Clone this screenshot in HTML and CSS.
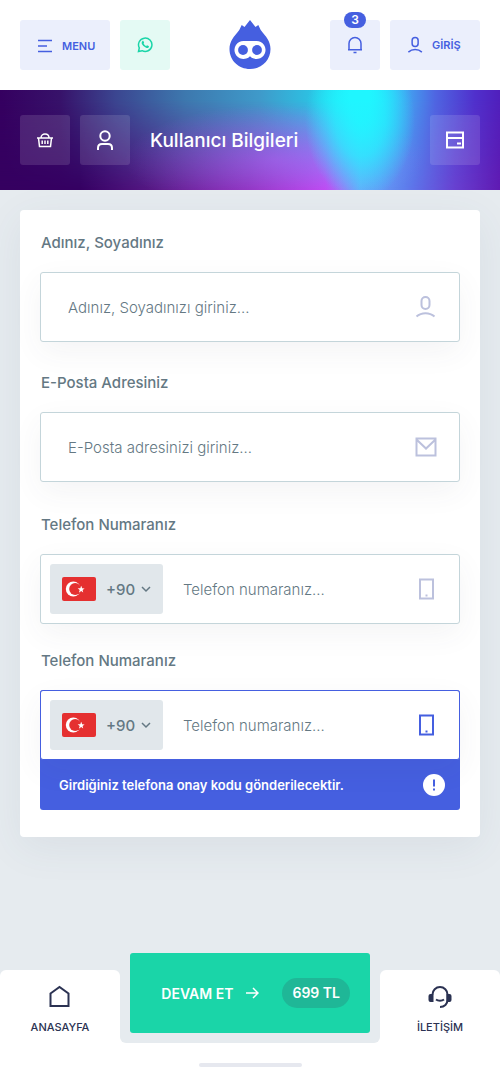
FILE: index.html
```html
<!DOCTYPE html>
<html lang="tr">
<head>
<meta charset="utf-8">
<meta name="viewport" content="width=device-width, initial-scale=1">
<title>Kullanıcı Bilgileri</title>
<link rel="stylesheet" href="styles.css">
</head>
<body>
<svg class="defs" aria-hidden="true">
  <symbol id="person" viewBox="0 0 22 24"><rect x="6.500" y="2" width="8" height="12" rx="4"/><path d="M1.500 21.500C6.500 17 14.500 17 19.500 21.500"/></symbol>
  <symbol id="phone" viewBox="0 0 16 24"><rect x="2" y="2.500" width="13" height="19"/><path d="M7.500 18.500h2"/></symbol>
  <symbol id="flag" viewBox="0 0 34 24"><rect width="34" height="24" rx="2" fill="#e53030"/><circle cx="11.300" cy="12" r="7.500" fill="#fff"/><circle cx="13.200" cy="12" r="6" fill="#e53030"/><path d="M19.300 8.800l.8 2.500 2.500.2-2 1.500.6 2.600-2-1.500-2.300 1.300.8-2.500-2-1.600h2.600z" fill="#fff"/></symbol>
  <symbol id="chevron" viewBox="0 0 10 7"><path d="M1 1l4 4 4-4"/></symbol>
</svg>

<header class="topbar">
  <div class="topbar-group">
    <button class="tile tile-wide" type="button">
      <svg class="icon icon-menu" viewBox="0 0 14 14"><path d="M0 1.500h14M0 7h9M0 12.500h14"/></svg>
      MENU
    </button>
    <a class="tile tile-green" href="#" aria-label="WhatsApp">
      <svg class="icon icon-whatsapp" viewBox="0 0 16 16"><path d="M1.500 14.500l.8-3.600A6.700 6.700 0 1 1 5.100 13.700z"/><path class="solid" d="M5.300 4.200c.4-.5 1-.4 1.200 0l.6 1.300c.2.4-.4.900-.6 1.100.6 1.200 1.500 2.100 2.700 2.600.3-.3.700-1 1.200-.8l1.300.7c.4.200.3.900-.1 1.300-.8.800-1.700.7-2.500.4A7.200 7.200 0 0 1 5 7.300c-.5-1.200-.5-2.200.3-3.100z"/></svg>
    </a>
  </div>
  <a class="logo" href="#" aria-label="Ana sayfa">
    <svg viewBox="0 0 42 50"><path fill="#455fe0" d="M21 0l5.500 7 2.800-2 2.400 4.900C37 16.500 41.500 21 41.500 29c0 11.500-9.200 20-20.500 20S.5 40.500.5 29C.5 21 5 16.500 10.300 9.900L12.700 5l2.800 2z"/><path fill="#fff" d="M14.500 21h13a9 9 0 1 1-6.500 15.200A9 9 0 1 1 14.500 21z"/><circle cx="14" cy="30" r="4.900" fill="#455fe0"/><circle cx="28" cy="30" r="4.900" fill="#455fe0"/></svg>
  </a>
  <div class="topbar-group">
    <button class="tile" type="button" aria-label="Bildirimler">
      <svg class="icon icon-bell" viewBox="0 0 16 18"><path d="M2 13.500V7.500a6 6 0 0 1 12 0v6M1 13.800h14M6.500 16.500h3"/></svg>
      <span class="badge">3</span>
    </button>
    <a class="tile tile-wide tile-login" href="#">
      <svg class="icon icon-login"><use href="#person"/></svg>
      GİRİŞ
    </a>
  </div>
</header>

<section class="hero">
  <a class="glass" href="#" aria-label="Sepet">
    <svg class="icon icon-basket" viewBox="0 0 16 16"><path d="M0 6h16M1.500 6l1 8.500h11l1-8.500M4 6c0-5.300 8-5.300 8 0M5.200 8.500v3.500M8 8.500v3.500M10.800 8.500v3.500"/></svg>
  </a>
  <a class="glass" href="#" aria-label="Hesap">
    <svg class="icon icon-user" viewBox="0 0 16 20"><circle cx="8" cy="6" r="4.700"/><path d="M1 20v-2c0-2.500 1.500-4 4-4h6c2.500 0 4 1.500 4 4v2"/></svg>
  </a>
  <h1 class="hero-title">Kullanıcı Bilgileri</h1>
  <a class="glass" href="#" aria-label="Ödeme">
    <svg class="icon icon-card" viewBox="0 0 18 18"><path d="M1 1.500h16v15H1zM1 7h16M11 12.500h4"/></svg>
  </a>
</section>

<main class="content">
  <form class="card">
    <div class="field">
      <label class="label" for="name">Adınız, Soyadınız</label>
      <div class="box">
        <input class="input" id="name" type="text" placeholder="Adınız, Soyadınızı giriniz...">
        <svg class="icon field-icon"><use href="#person"/></svg>
      </div>
    </div>
    <div class="field">
      <label class="label" for="email">E-Posta Adresiniz</label>
      <div class="box">
        <input class="input" id="email" type="email" placeholder="E-Posta adresinizi giriniz...">
        <svg class="icon field-icon" viewBox="0 0 24 24"><path d="M2.500 3.500h19v17h-19zM2.500 4.500l9.500 9 9.500-9"/></svg>
      </div>
    </div>
    <div class="field field-phone">
      <label class="label" for="phone1">Telefon Numaranız</label>
      <div class="box box-phone">
        <div class="code">
          <svg class="flag"><use href="#flag"/></svg>
          <select class="code-select" aria-label="Ülke kodu"><option>+90</option></select>
          <svg class="icon chevron"><use href="#chevron"/></svg>
        </div>
        <input class="input" id="phone1" type="tel" placeholder="Telefon numaranız...">
        <svg class="icon field-icon"><use href="#phone"/></svg>
      </div>
    </div>
    <div class="field field-phone">
      <label class="label" for="phone2">Telefon Numaranız</label>
      <div class="noted">
        <div class="box box-phone box-active">
          <div class="code">
            <svg class="flag"><use href="#flag"/></svg>
            <select class="code-select" aria-label="Ülke kodu"><option>+90</option></select>
            <svg class="icon chevron"><use href="#chevron"/></svg>
          </div>
          <input class="input" id="phone2" type="tel" placeholder="Telefon numaranız...">
          <svg class="icon field-icon"><use href="#phone"/></svg>
        </div>
        <p class="note">
          Girdiğiniz telefona onay kodu gönderilecektir.
          <svg class="note-icon" viewBox="0 0 22 22"><circle cx="11" cy="11" r="11" fill="#fff"/><path d="M10 5.500h2v7h-2zM10 14.500h2v2h-2z" fill="#455fe0"/></svg>
        </p>
      </div>
    </div>
  </form>
</main>

<footer class="bottom">
  <nav class="tabs">
    <a class="tab" href="#">
      <svg class="icon icon-tab" viewBox="0 0 24 24"><path d="M2.500 8.500L11.500 2l9 6.500v12.500h-18z"/></svg>
      ANASAYFA
    </a>
    <div class="dock">
      <button class="continue" type="button">
        DEVAM ET
        <svg class="icon icon-arrow" viewBox="0 0 13 12"><path d="M0 6h12M7 1l5 5-5 5"/></svg>
        <span class="price">699 TL</span>
      </button>
    </div>
    <a class="tab" href="#">
      <svg class="icon icon-tab" viewBox="0 0 24 24"><path d="M4.500 9.500a7.500 7.500 0 0 1 15 0v5.500c0 4-3 7-7.500 7M8 14.500c2 1.500 6 1.500 8 0"/><path class="solid" d="M2.500 9h3v8h-3A2 2 0 0 1 .5 15v-4a2 2 0 0 1 2-2zM18.500 9h3a2 2 0 0 1 2 2v4a2 2 0 0 1-2 2h-3z"/></svg>
      İLETİŞİM
    </a>
  </nav>
  <div class="home-area"><span class="home-bar"></span></div>
</footer>
</body>
</html>
```

FILE: styles.css
```css
* {
  box-sizing: border-box;
}

body {
  margin: 0;
  min-height: 100vh;
  display: flex;
  flex-direction: column;
  background: #e6ebef;
  color: #647883;
  font-family: Inter, "Open Sans", sans-serif;
  font-size: 15px;
}

a {
  color: inherit;
  text-decoration: none;
}

button,
input,
select {
  border: 0;
  padding: 0;
  background: none;
  color: inherit;
  font: inherit;
}

.defs {
  position: absolute;
  width: 0;
  height: 0;
}

.icon {
  flex: none;
  fill: none;
  stroke: currentColor;
  stroke-width: 2;
}

.icon .solid {
  fill: currentColor;
  stroke: none;
}

/* Top bar */
.topbar {
  display: grid;
  grid-template-columns: 1fr auto 1fr;
  align-items: center;
  padding: 20px;
  background: #fff;
}

.topbar-group {
  display: flex;
  gap: 10px;
}

.topbar-group:last-child {
  justify-content: flex-end;
}

.tile {
  position: relative;
  display: flex;
  align-items: center;
  justify-content: center;
  gap: 10px;
  width: 50px;
  height: 50px;
  border-radius: 3px;
  background: #ebeffc;
  color: #455fe0;
  font-size: 11px;
  font-weight: 600;
}

.tile-wide {
  justify-content: flex-start;
  width: 90px;
  padding: 2px 0 0 18px;
}

.tile-login {
  gap: 8px;
  padding: 0 0 0 17px;
}

.tile-green {
  background: #e4faf4;
  color: #1ad5a8;
}

.icon-menu {
  width: 14px;
  height: 14px;
  stroke-width: 1.5;
}

.icon-whatsapp {
  width: 16px;
  height: 16px;
  stroke-width: 1.5;
}

.icon-bell {
  width: 16px;
  height: 18px;
  stroke-width: 1.5;
}

.icon-login {
  width: 17px;
  height: 18px;
}

.badge {
  position: absolute;
  top: -8px;
  left: 14px;
  width: 22px;
  border-radius: 8px;
  background: #455fe0;
  color: #fff;
  font-size: 12px;
  line-height: 16px;
  text-align: center;
}

.logo {
  display: block;
  width: 42px;
  height: 50px;
}

/* Title banner */
.hero {
  position: relative;
  z-index: 0;
  display: flex;
  align-items: center;
  gap: 10px;
  height: 100px;
  padding: 0 20px;
  color: #fff;
  background: linear-gradient(90deg, #350060 0%, #37126a 12%, #3b4590 23%, #3d78ae 37%, #3f9aca 52%, #2dc0e2 62%, #1ff6ff 70%, #1ff6ff 74%, #3fb0f4 80%, #4f66e2 87%, #5030cc 95%, #501fbc 100%);
}

.hero::before,
.hero::after {
  content: "";
  position: absolute;
  inset: 0;
  z-index: -1;
}

.hero::before {
  background: linear-gradient(90deg, #350060 0%, #350062 16%, #5a1a88 32%, #8a2cb8 50%, #c045f0 65%, #a070f5 68%, #62aefa 72%, #5f9cf5 76%, #5f70e8 83%, #6840d0 91%, #601ab2 100%);
  mask-image: linear-gradient(transparent 10%, #000 100%);
}

.hero::after {
  background:
    radial-gradient(11% 80% at 72% 30%, rgba(31, 246, 255, 0.9) 0%, rgba(31, 246, 255, 0.65) 45%, rgba(31, 246, 255, 0) 100%),
    radial-gradient(30% 55% at 55% 70%, rgba(190, 100, 255, 0.45) 0%, rgba(190, 100, 255, 0) 100%);
}

.glass {
  display: flex;
  align-items: center;
  justify-content: center;
  width: 50px;
  height: 50px;
  border-radius: 3px;
  background: rgba(255, 255, 255, 0.12);
}

.icon-basket {
  width: 16px;
  height: 16px;
  stroke-width: 1.5;
}

.icon-user {
  width: 16px;
  height: 20px;
}

.icon-card {
  width: 18px;
  height: 18px;
}

.hero-title {
  flex: 1;
  margin: 0 10px;
  font-size: 19px;
  font-weight: 500;
}

/* Form */
.content {
  padding: 20px;
}

.card {
  padding: 20px 20px 27px;
  border-radius: 4px;
  background: #fff;
  box-shadow: 0 10px 40px rgba(70, 90, 110, 0.08);
}

.field + .field {
  margin-top: 28px;
}

.field + .field-phone {
  margin-top: 30px;
}

.field-phone + .field-phone {
  margin-top: 24px;
}

.label {
  display: block;
  margin-bottom: 16px;
  padding-left: 1px;
  line-height: 26px;
  font-weight: 500;
}

.box {
  display: flex;
  align-items: center;
  height: 70px;
  padding: 0 21px 0 27px;
  border: 1px solid #c4d5da;
  border-radius: 3px;
  background: #fff;
  box-shadow: 0 10px 30px rgba(60, 70, 90, 0.06);
}

.box-phone {
  gap: 20px;
  padding-left: 9px;
}

.input {
  flex: 1;
  min-width: 0;
  height: 100%;
  outline: 0;
  font-weight: 300;
}

.input::placeholder {
  color: #647883;
  opacity: 1;
}

.field-icon {
  width: 24px;
  height: 24px;
  color: #bcc1dd;
}

.code {
  display: flex;
  align-items: center;
  width: 113px;
  height: 50px;
  padding: 0 12px;
  border-radius: 3px;
  background: #e1e7eb;
}

.flag {
  flex: none;
  width: 34px;
  height: 24px;
}

.code-select {
  flex: 1;
  min-width: 0;
  margin-left: 10px;
  appearance: none;
  font-weight: 500;
}

.chevron {
  width: 10px;
  height: 7px;
  stroke-width: 1.5;
}

.box-active {
  border-color: #455fe0;
}

.box-active .field-icon {
  color: #455fe0;
}

.noted {
  border-radius: 3px;
  background: #455fe0;
}

.note {
  display: flex;
  align-items: center;
  justify-content: space-between;
  height: 50px;
  margin: 0;
  padding: 0 15px 0 19px;
  color: #fff;
  font-size: 13px;
  font-weight: 600;
}

.note-icon {
  flex: none;
  width: 22px;
  height: 22px;
}

/* Bottom navigation */
.bottom {
  margin-top: auto;
}

.tabs {
  display: grid;
  grid-template-columns: 120px 1fr 120px;
  align-items: end;
}

.tab {
  display: flex;
  flex-direction: column;
  align-items: center;
  gap: 10px;
  height: 73px;
  padding-top: 15px;
  border-radius: 6px 6px 0 0;
  background: #fff;
  color: #2b3252;
  font-size: 11px;
  line-height: 16px;
  font-weight: 500;
}

.icon-tab {
  width: 24px;
  height: 24px;
}

.dock {
  padding: 0 10px 10px;
  border-radius: 0 0 6px 6px;
  background: #e6ebef;
  box-shadow: 0 6px 0 #fff;
}

.continue {
  display: flex;
  align-items: center;
  justify-content: flex-end;
  width: 100%;
  height: 80px;
  padding-right: 20px;
  border-radius: 3px;
  background: #1ad5a8;
  color: #fff;
  font-size: 14px;
  font-weight: 600;
}

.icon-arrow {
  width: 13px;
  height: 12px;
  margin: 0 23px 0 13px;
  stroke-width: 1.5;
}

.price {
  padding: 0 10px;
  border-radius: 15px;
  background: #1fb797;
  line-height: 30px;
}

.home-area {
  display: flex;
  justify-content: center;
  height: 37px;
  padding-top: 20px;
  background: #fff;
}

.home-bar {
  width: 103px;
  height: 4px;
  border-radius: 2px;
  background: #e6e8ef;
}
```
